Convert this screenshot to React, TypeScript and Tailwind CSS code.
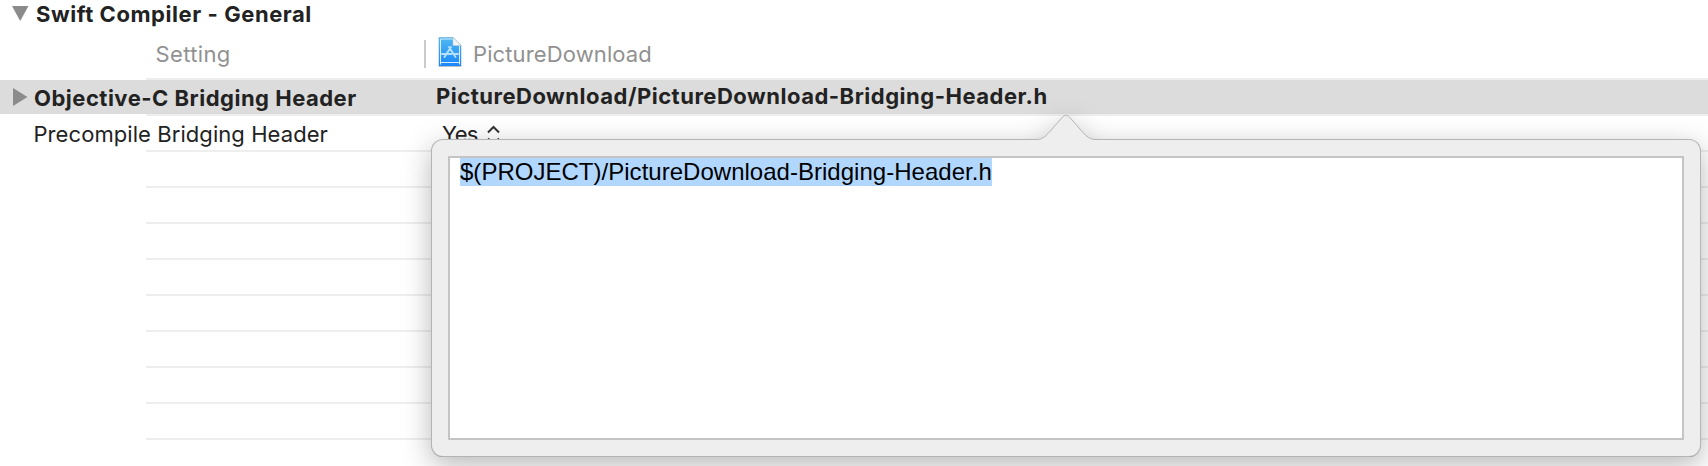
import React from "react";

function ProjectIcon() {
  return (
    <svg width="24" height="32" viewBox="0 0 24 32" className="block shrink-0">
      <defs>
        <linearGradient id="doc" x1="0" y1="0" x2="0" y2="1">
          <stop offset="0" stopColor="#4fb9f0" />
          <stop offset="1" stopColor="#1a86fb" />
        </linearGradient>
      </defs>
      <path d="M.5 1h14.7l8.300 8.300V31H.5z" fill="#b9c3cb" />
      <path d="M1 1.500h14l8 8V30H1z" fill="url(#doc)" />
      <path d="M2.500 28.500V3H14.500M21.500 10V28.500M2.500 26.500h19" fill="none" stroke="#d3ecff" strokeWidth="1" />
      <path d="M15 1.500l8 8h-8z" fill="#f3f3f3" stroke="#c5cbd0" strokeWidth=".5" />
      <path
        d="M13 11L6.500 21M11 11L17.500 21M4 18h9.500M16 18h4"
        fill="none"
        stroke="#b5e0ff"
        strokeWidth="1.900"
        strokeLinecap="round"
      />
    </svg>
  );
}

function SettingRow({ children }: { children?: React.ReactNode }) {
  return (
    <div className="flex h-9 flex-col">
      <div className="flex h-[34px]">{children}</div>
      <div className="ml-[146px] h-0.5 bg-[#eeeeee]" />
    </div>
  );
}

export default function App() {
  return (
    <div className="relative h-[466px] w-[1708px] overflow-hidden bg-white font-['Inter',sans-serif] text-[22px] leading-7 whitespace-nowrap text-[#222222]">
      <div className="flex h-7 pl-3">
        <svg width="17" height="16" viewBox="0 0 17 16" className="mt-[5px]">
          <path d="M0 1h16.500L8.200 16z" fill="#8b8b8b" />
        </svg>
        <span className="ml-[7px] font-bold tracking-[0.56px]">Swift Compiler - General</span>
      </div>

      <div className="flex h-[50px] text-[#919191]">
        <span className="mt-3 ml-[146px] w-[268px] pl-[9.5px] tracking-[0.36px]">Setting</span>
        <div className="mt-3 ml-[10px] h-7 w-0.5 bg-[#cbcbcb]" />
        <div className="mt-2 ml-3">
          <ProjectIcon />
        </div>
        <span className="mt-3 ml-[11px] tracking-[0.12px]">PictureDownload</span>
      </div>
      <div className="ml-[146px] h-0.5 bg-[#eeeeee]" />

      <div className="bg-[linear-gradient(#dcdcdc,#dcdcdc)] bg-[length:100%_34px] bg-no-repeat">
        <SettingRow>
          <div className="flex w-[436px] pl-[13px] font-bold">
            <svg width="15" height="18" viewBox="0 0 15 18" className="mt-2">
              <path d="M0 0v18l14.500-9z" fill="#8b8b8b" />
            </svg>
            <span className="mt-1 ml-[6px] tracking-[0.5px]">Objective-C Bridging Header</span>
          </div>
          <span className="mt-0.5 font-bold tracking-[0.51px]">
            PictureDownload/PictureDownload-Bridging-Header.h
          </span>
        </SettingRow>
      </div>

      <SettingRow>
        <span className="mt-1 w-[442px] pl-[33.5px] tracking-[0.07px]">Precompile Bridging Header</span>
        <span className="mt-1 w-[45px] tracking-[-0.6px]">Yes</span>
        <svg width="13" height="20" viewBox="0 0 13 20" className="mt-[9px]">
          <path d="M1 7.500L6.500 2L12 7.500M1 13.500L6.500 19L12 13.500" fill="none" stroke="#333" strokeWidth="2" />
        </svg>
      </SettingRow>
      {Array.from({ length: 8 }, (_, i) => (
        <SettingRow key={i} />
      ))}

      <div className="absolute top-[140px] left-[432px] h-[316px] w-[1268px] [filter:drop-shadow(0_8px_14px_rgba(0,0,0,0.28))]">
        <div className="h-full rounded-[11px] bg-[#eeeeee] p-4 shadow-[0_0_0_1px_#b4b4b4,0_0.5px_0_0.5px_#8c8c8c]">
          <div className="h-full border-2 border-[#c4c4c4] bg-white pl-[10px] text-[24px] text-black">
            <span className="inline-block h-7 bg-[#b2d7ff] align-top font-['Liberation_Sans',sans-serif] tracking-[0.02px]">
              $(PROJECT)/PictureDownload-Bridging-Header.h
            </span>
          </div>
        </div>
        <svg width="60" height="27" viewBox="0 0 60 27" className="absolute -top-[26px] left-[604px]">
          <path
            d="M0 27V25.500C6 25.500 9.500 22.500 13.500 18L26.500 3Q30-.5 33.500 3L46.500 18C50.500 22.500 54 25.500 60 25.500V27z"
            fill="#eeeeee"
          />
          <path
            d="M0 25.500C6 25.500 9.500 22.500 13.500 18L26.500 3Q30-.5 33.500 3L46.500 18C50.500 22.500 54 25.500 60 25.500"
            fill="none"
            stroke="#b4b4b4"
          />
        </svg>
      </div>
    </div>
  );
}
